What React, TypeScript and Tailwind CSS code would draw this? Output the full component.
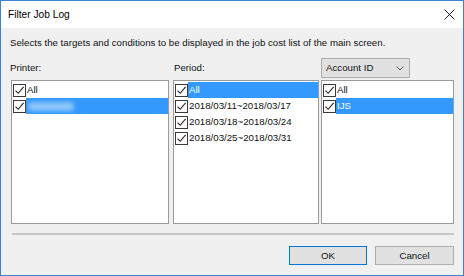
import React from "react";

type Row = { label: string; selected?: boolean; redacted?: boolean };

const printers: Row[] = [{ label: "All" }, { label: "", selected: true, redacted: true }];
const periods: Row[] = [
  { label: "All", selected: true },
  { label: "2018/03/11~2018/03/17" },
  { label: "2018/03/18~2018/03/24" },
  { label: "2018/03/25~2018/03/31" },
];
const accounts: Row[] = [{ label: "All" }, { label: "IJS", selected: true }];

function Check() {
  return (
    <span className="w-[13px] h-[13px] shrink-0 border border-[#3a3a3a] bg-white flex items-center justify-center">
      <svg width="11" height="11" viewBox="0 0 11 11">
        <path d="M1.5 5.6 L4.2 8.3 L9.6 1.9" fill="none" stroke="#222222" strokeWidth="1.1" />
      </svg>
    </span>
  );
}

function ListBox({ rows, width }: { rows: Row[]; width: string }) {
  return (
    <div className={`${width} h-[144px] border border-[#9a9a9a] bg-white pt-[1px] pl-[1px]`}>
      {rows.map((r, i) => (
        <div key={i} className="flex items-center h-[16px]">
          <Check />
          <div
            className={`flex-1 h-[16px] flex items-center pl-[1px] ${
              r.selected ? "bg-[#3399ff] text-white" : "text-[#111111]"
            }`}
          >
            {r.redacted ? (
              <span className="ml-[1px] w-[46px] h-[9px] bg-[#8ec6fb] blur-[2px] rounded-sm" />
            ) : (
              r.label
            )}
          </div>
        </div>
      ))}
    </div>
  );
}

export default function App() {
  return (
    <div
      className="w-[464px] h-[276px] border border-[#3a86cc] bg-[#f0f0f0] flex flex-col text-[9.7px] leading-[16px] text-[#111111]"
      style={{ fontFamily: '"Segoe UI", "Liberation Sans", Arial, sans-serif' }}
    >
      {/* Title bar */}
      <div className="h-[27px] bg-white flex items-center justify-between pl-[7px] pr-[8px]">
        <span className="text-[10.2px] text-black">Filter Job Log</span>
        <svg width="11" height="11" viewBox="0 0 11 11">
          <path d="M0.5 0.5 L10.5 10.5 M10.5 0.5 L0.5 10.5" stroke="#222222" strokeWidth="1" />
        </svg>
      </div>

      {/* Body */}
      <div className="flex flex-col pl-[10px] pr-[9px] pt-[7px]">
        <p className="-ml-[1px]">
          Selects the targets and conditions to be displayed in the job cost list of the main screen.
        </p>

        <div className="flex mt-[6px]">
          <div className="flex flex-col w-[158px]">
            <div className="h-[23px] pt-[3px] -ml-[1px]">Printer:</div>
            <ListBox rows={printers} width="w-[158px]" />
          </div>
          <div className="flex flex-col w-[146px] ml-[4px]">
            <div className="h-[23px] pt-[3px] pl-[1px]">Period:</div>
            <ListBox rows={periods} width="w-[146px]" />
          </div>
          <div className="flex flex-col w-[133px] ml-[2px]">
            <div className="h-[23px] pt-[1px]">
              <div className="w-[89px] h-[20px] border border-[#adadad] bg-[#e1e1e1] flex items-center justify-between pl-[4px] pr-[5px]">
                <span>Account ID</span>
                <svg width="8" height="5" viewBox="0 0 8 5">
                  <path d="M0.5 0.5 L4 4 L7.5 0.5" fill="none" stroke="#555555" strokeWidth="1" />
                </svg>
              </div>
            </div>
            <ListBox rows={accounts} width="w-[133px]" />
          </div>
        </div>

        {/* Separator */}
        <div className="mt-[9px] w-[442px] ml-[1px] h-[2px] bg-[#c6c6c6]" />

        {/* Buttons */}
        <div className="flex justify-end gap-[8px] mt-[11px]">
          <button className="w-[78px] h-[19px] border border-[#0078d7] bg-[#e1e1e1] text-[#111111] flex items-center justify-center">
            OK
          </button>
          <button className="w-[79px] h-[19px] border border-[#adadad] bg-[#e1e1e1] text-[#111111] flex items-center justify-center">
            Cancel
          </button>
        </div>
      </div>
    </div>
  );
}
